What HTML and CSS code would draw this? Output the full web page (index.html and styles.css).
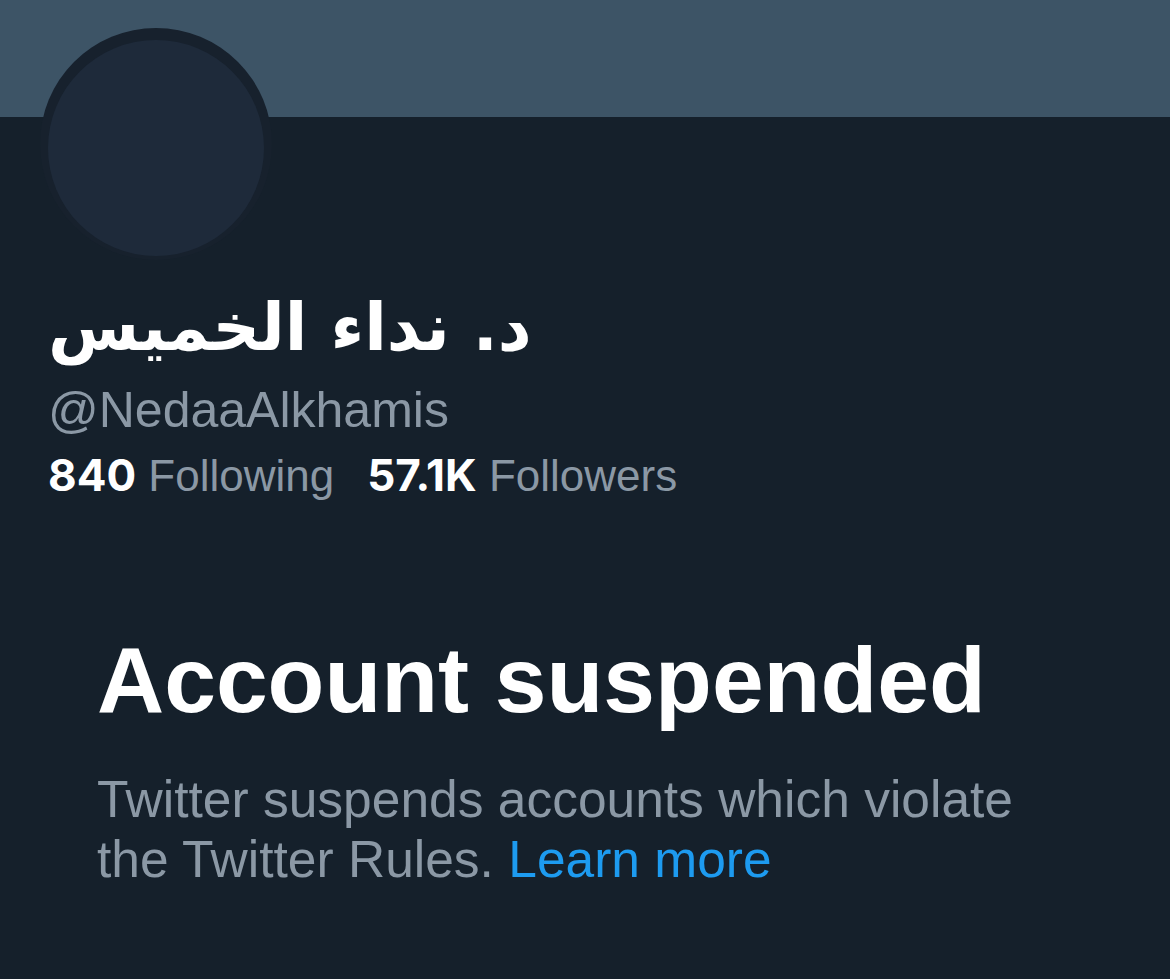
FILE: index.html
```html
<!DOCTYPE html>
<html lang="en">
<head>
<meta charset="utf-8">
<title>Account suspended</title>
<link rel="stylesheet" href="styles.css">
</head>
<body>
<div class="page">
  <div class="banner"></div>
  <section class="profile">
    <div class="avatar"><div class="avatar-inner"></div></div>
    <h1 class="name"><span dir="rtl" lang="ar">د. نداء الخميس</span></h1>
    <div class="handle">@NedaaAlkhamis</div>
    <div class="stats">
      <span class="stat"><b class="num">840</b> Following</span>
      <span class="stat"><b class="num">57.1K</b> Followers</span>
    </div>
  </section>
  <section class="suspended">
    <h2 class="title">Account suspended</h2>
    <p class="desc">Twitter suspends accounts which violate the Twitter Rules. <a class="link" href="#">Learn more</a></p>
  </section>
</div>
</body>
</html>
```
FILE: styles.css
```css
html, body {
  margin: 0;
  padding: 0;
  background: #15202b;
}
body {
  font-family: "Liberation Sans", Arial, sans-serif;
  color: #ffffff;
  width: 1170px;
  height: 979px;
  overflow: hidden;
}
.banner {
  height: 117px;
  background: #3d5466;
}
.profile {
  padding: 0 48px;
}
.avatar {
  width: 232px;
  height: 232px;
  box-sizing: border-box;
  padding: 12px 8px 4px 8px;
  border-radius: 50%;
  background: #17212d;
  margin-top: -89px;
  margin-left: -8px;
}
.avatar-inner {
  width: 216px;
  height: 216px;
  border-radius: 50%;
  background: #1e2a3a;
}
.name {
  margin: 33px 0 0 0;
  font-family: "DejaVu Sans", sans-serif;
  font-size: 66px;
  font-weight: 700;
  line-height: 70px;
  text-align: left;
}
.name span {
  display: inline-block;
  unicode-bidi: isolate;
}
.handle {
  margin-top: 14px;
  font-size: 50px;
  line-height: 66px;
  color: #8b98a5;
}
.stats {
  margin-top: 0;
  font-size: 44px;
  line-height: 64px;
  color: #8b98a5;
  display: flex;
  gap: 33px;
}
.num {
  color: #ffffff;
  font-family: "Inter", "Liberation Sans", sans-serif;
  font-size: 44px;
  font-weight: 700;
}
.suspended {
  padding: 0 97px;
  margin-top: 117px;
}
.title {
  margin: 0;
  font-size: 93px;
  font-weight: 700;
  line-height: 110px;
}
.desc {
  margin: 34px 0 0 0;
  font-size: 51.5px;
  line-height: 60px;
  color: #8b98a5;
}
.link {
  color: #1d9bf0;
  text-decoration: none;
}
```
